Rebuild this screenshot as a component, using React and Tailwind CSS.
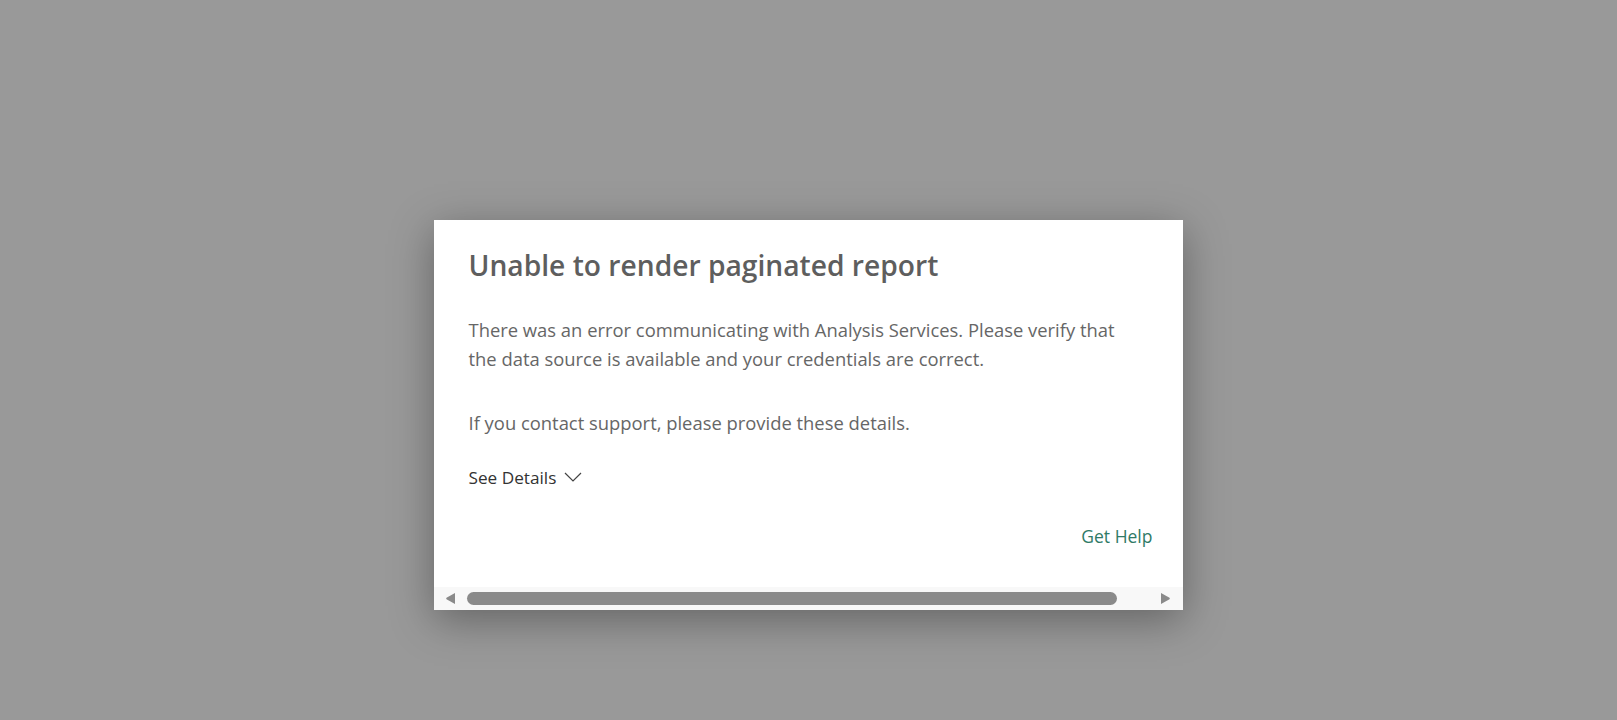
export default function App() {
  return (
    <div className="w-full h-[720px] bg-[#999999] flex justify-center pt-[220px] pr-[1px]" style={{ fontFamily: '"Open Sans", "Noto Sans", sans-serif' }}>
      <div className="w-[749px] h-[390px] bg-white shadow-[0_10px_40px_rgba(0,0,0,0.35)] flex flex-col">
        <div className="flex-1 flex flex-col pl-[35px] pr-[30px]">
          <h1 className="mt-[27px] text-[28.2px] leading-[36px] font-semibold text-[#5e5e5e]">
            Unable to render paginated report
          </h1>
          <p className="mt-[32px] text-[18.4px] leading-[29px] text-[#666666]">
            There was an error communicating with Analysis Services. Please verify that
            <br />
            the data source is available and your credentials are correct.
          </p>
          <p className="mt-[35px] text-[18.4px] leading-[29px] text-[#666666]">
            If you contact support, please provide these details.
          </p>
          <button className="mt-[29px] self-start flex items-center gap-[8px] text-[17.2px] leading-[24px] text-[#333333]">
            See Details
            <svg width="18" height="10" viewBox="0 0 18 10" className="shrink-0 -mt-[3px]">
              <path d="M1 1 L9 9 L17 1" fill="none" stroke="#444444" strokeWidth="1.2" />
            </svg>
          </button>
          <div className="mt-[33px] flex justify-end">
            <button className="text-[17.5px] leading-[26px] text-[#2f7a66]">Get Help</button>
          </div>
        </div>
        <div className="h-[23px] bg-[#f8f8f8] flex items-center pl-[11px] pr-[12px] gap-[11px]">
          <svg width="11" height="13" viewBox="0 0 11 13" className="shrink-0">
            <path d="M10 1 L10 12 L1.5 7.2 Q0.8 6.5 1.5 5.8 Z" fill="#8a8a8a" />
          </svg>
          <div className="h-[13px] w-[650px] rounded-full bg-[#8a8a8a]" />
          <div className="flex-1" />
          <svg width="11" height="13" viewBox="0 0 11 13" className="shrink-0">
            <path d="M1 1 L1 12 L9.5 7.2 Q10.2 6.5 9.5 5.8 Z" fill="#8a8a8a" />
          </svg>
        </div>
      </div>
    </div>
  );
}
